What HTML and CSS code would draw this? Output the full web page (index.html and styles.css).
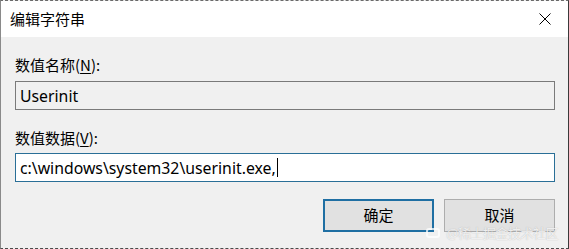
FILE: index.html
```html
<!DOCTYPE html>
<html lang="zh-CN">
<head>
    <meta charset="UTF-8">
    <title>编辑字符串</title>
    <link rel="stylesheet" href="styles.css">
</head>
<body>
    <div class="dialog">
        <div class="titlebar">
            <span class="title">编辑字符串</span>
            <span class="close">
                <svg width="12" height="12" viewBox="0 0 12 12">
                    <path d="M0.5 0.5 L11.5 11.5 M11.5 0.5 L0.5 11.5" stroke="#000" stroke-width="1" fill="none"/>
                </svg>
            </span>
        </div>
        <div class="content">
            <label class="field-label">数值名称(<u>N</u>):</label>
            <div class="textbox readonly">Userinit</div>

            <label class="field-label second">数值数据(<u>V</u>):</label>
            <div class="textbox focused">c:\windows\system32\userinit.exe,<span class="caret"></span></div>

            <div class="buttons">
                <button class="btn default">确定</button>
                <button class="btn">取消</button>
            </div>
        </div>
        <div class="watermark"><span class="logo"></span>@稀土掘金技术社区</div>
    </div>
</body>
</html>
```

FILE: styles.css
```css
body {
    margin: 0;
    padding: 0;
    width: 569px;
    height: 249px;
    overflow: hidden;
    background: #f0f0f0;
    font-family: "Noto Sans", "Noto Sans CJK SC", sans-serif;
    font-size: 15px;
    color: #000;
}
.dialog {
    position: relative;
    box-sizing: border-box;
    width: 569px;
    height: 249px;
    border-left: 1px solid #8a8a8a;
    border-right: 1px solid #3a3a3a;
    border-top: 1px dashed #6a6a6a;
    border-bottom: 1px dashed #4a4a4a;
    background: #f0f0f0;
}
.titlebar {
    height: 36px;
    background: #fff;
    display: flex;
    align-items: center;
    justify-content: space-between;
    padding: 0 0 0 9px;
}
.title {
    font-family: "Noto Sans CJK SC", sans-serif;
    font-size: 15px;
    line-height: 1;
    margin-top: -1px;
}
.close {
    width: 46px;
    height: 36px;
    display: flex;
    align-items: center;
    justify-content: center;
}
.content {
    padding: 18px 13px 0 14px;
    display: flex;
    flex-direction: column;
}
.field-label {
    display: block;
    font-family: "Noto Sans CJK SC", sans-serif;
    line-height: 20px;
    height: 20px;
    margin-bottom: 6px;
}
.field-label u {
    text-decoration-thickness: 1px;
    text-underline-offset: 2px;
}
.field-label.second {
    margin-top: 18px;
    margin-bottom: 5px;
}
.textbox {
    box-sizing: border-box;
    height: 29px;
    width: 540px;
    padding: 0 4px;
    display: flex;
    align-items: center;
    font-size: 15.8px;
    white-space: nowrap;
}
.textbox.readonly {
    border: 1px solid #7a7a7a;
    background: #f0f0f0;
}
.textbox.focused {
    border: 1px solid #2a6f97;
    background: #fff;
}
.caret {
    display: inline-block;
    width: 1px;
    height: 19px;
    background: #000;
    margin-left: 1px;
}
.buttons {
    display: flex;
    justify-content: flex-end;
    gap: 10px;
    margin-top: 17px;
    width: 540px;
}
.btn {
    box-sizing: border-box;
    width: 111px;
    height: 33px;
    background: #e1e1e1;
    border: 1px solid #adadad;
    font-family: "Noto Sans CJK SC", sans-serif;
    font-size: 15px;
    line-height: 18px;
    color: #000;
    padding: 0 0 2px;
}
.btn.default {
    border: 2px solid #1f6fa3;
}
.watermark {
    position: absolute;
    right: 10px;
    bottom: 9px;
    display: flex;
    align-items: center;
    gap: 6px;
    font-family: "Noto Sans CJK SC", sans-serif;
    font-size: 13px;
    line-height: 13px;
    color: rgba(255, 255, 255, 0.8);
    text-shadow: 0 0 1px rgba(110, 110, 110, 0.5);
    letter-spacing: -0.5px;
}
.logo {
    width: 14px;
    height: 10px;
    border: 2px solid rgba(255, 255, 255, 0.75);
    border-radius: 3px;
    box-sizing: border-box;
}
```
